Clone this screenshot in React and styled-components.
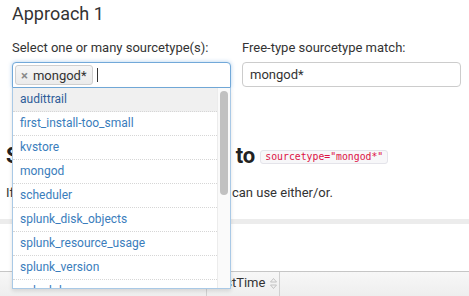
import React from 'react';
import styled, { createGlobalStyle } from 'styled-components';

const GlobalStyle = createGlobalStyle`
  body {
    margin: 0;
    background: #fff;
    color: #333;
    font-family: Roboto, "Liberation Sans", Arial, sans-serif;
    overflow: hidden;
  }
`;

const options = [
  'audittrail',
  'first_install-too_small',
  'kvstore',
  'mongod',
  'scheduler',
  'splunk_disk_objects',
  'splunk_resource_usage',
  'splunk_version',
  'splunkd_access'
];

const Page = styled.div`
  width: 469px;
  height: 296px;
  overflow: hidden;
`;

const TopPanel = styled.div`
  padding: 0 8px 0 12px;
`;

const Title = styled.h2`
  margin: 3px 0 0;
  font-size: 18px;
  line-height: 22px;
  font-weight: 400;
  color: #333;
`;

const Row = styled.div`
  display: grid;
  grid-template-columns: 219px 219px;
  column-gap: 11px;
  margin-top: 15px;
`;

const Field = styled.div`
  position: relative;
  display: flex;
  flex-direction: column;
`;

const Label = styled.label`
  font-size: 13px;
  line-height: 16px;
  margin-bottom: 6px;
  color: #333;
`;

const MultiBox = styled.div`
  box-sizing: border-box;
  height: 26px;
  display: flex;
  align-items: center;
  gap: 4px;
  padding: 0 2px;
  border: 1px solid #72a9d9;
  border-radius: 4px 4px 0 0;
  box-shadow: 0 0 4px rgba(82, 150, 215, 0.45);
  background: #fff;
`;

const Token = styled.span`
  box-sizing: border-box;
  height: 20px;
  display: inline-flex;
  align-items: center;
  gap: 5px;
  padding: 0 5px;
  border: 1px solid #cfcfcf;
  border-radius: 3px;
  background: linear-gradient(#f6f6f6, #ebebeb);
  font-size: 13px;
  color: #333;
`;

const Remove = styled.span`
  font-size: 13px;
  font-weight: 700;
  color: #8a8a8a;
`;

const Caret = styled.span`
  width: 1px;
  height: 14px;
  background: #333;
`;

const Dropdown = styled.div`
  position: absolute;
  top: 100%;
  left: 0;
  right: 0;
  height: 201px;
  box-sizing: border-box;
  display: flex;
  background: #fff;
  border: 1px solid #a9c9e6;
  border-top: none;
  box-shadow: 0 2px 4px rgba(0, 0, 0, 0.12);
  z-index: 10;
`;

const List = styled.ul`
  flex: 1;
  margin: 0;
  padding: 0;
  list-style: none;
  overflow: hidden;
`;

const Option = styled.li`
  box-sizing: border-box;
  height: 24px;
  line-height: 23px;
  padding-left: 7px;
  font-size: 12px;
  border-bottom: 1px dotted #d6d6d6;
  color: ${p => (p.$active ? '#2e5d99' : '#3a7dbc')};
  background: ${p => (p.$active ? '#f0f0f0' : '#fff')};
  white-space: nowrap;
`;

const ScrollTrack = styled.div`
  width: 13px;
  box-sizing: border-box;
  padding: 3px 2px 0 2px;
  border-left: 1px solid #ececec;
  background: #fafafa;
`;

const ScrollThumb = styled.div`
  width: 8px;
  height: 104px;
  border-radius: 4px;
  background: #c1c1c1;
`;

const TextInput = styled.div`
  box-sizing: border-box;
  height: 25px;
  display: flex;
  align-items: center;
  padding: 0 7px;
  border: 1px solid #cccccc;
  border-radius: 4px;
  font-size: 13px;
  color: #333;
`;

const Section = styled.div`
  padding: 0 0 0 6px;
`;

const Heading = styled.h3`
  margin: 55px 0 0;
  font-size: 22px;
  line-height: 26px;
  font-weight: 700;
  color: #222;
  white-space: nowrap;
  display: flex;
  align-items: center;
  gap: 5px;
`;

const Code = styled.code`
  font-family: "DejaVu Sans Mono", "Liberation Mono", monospace;
  font-size: 9.8px;
  line-height: 12px;
  font-weight: 400;
  color: #dd1144;
  background: #f7f7f9;
  border: 1px solid #e4e4ea;
  border-radius: 3px;
  padding: 0 4px;
  margin-top: 2px;
`;

const Paragraph = styled.p`
  margin: 15px 0 0;
  font-size: 13px;
  line-height: 18px;
  white-space: nowrap;
`;

const Divider = styled.div`
  height: 5px;
  margin-top: 17px;
  background: #ececec;
`;

const TableHead = styled.div`
  display: flex;
  height: 27px;
  margin-top: 47px;
  border-top: 1px solid #c6c6c6;
  background: linear-gradient(#f7f7f7, #ededed);
`;

const HeadCell = styled.div`
  box-sizing: border-box;
  width: ${p => p.$width || 'auto'};
  flex: ${p => (p.$width ? 'none' : 1)};
  display: flex;
  align-items: flex-start;
  gap: 5px;
  padding: 3px 0 0 8px;
  font-size: 13px;
  line-height: 16px;
  color: #333;
  border-right: ${p => (p.$width ? '1px solid #d0d0d0' : 'none')};
`;

const SortIcon = styled.svg`
  width: 7px;
  height: 11px;
  margin-top: 3px;
`;

export default function App() {
  return (
    <Page>
      <GlobalStyle />
      <TopPanel>
        <Title>Approach 1</Title>
        <Row>
          <Field>
            <Label>Select one or many sourcetype(s):</Label>
            <MultiBox>
              <Token><Remove>×</Remove>mongod*</Token>
              <Caret />
            </MultiBox>
            <Dropdown>
              <List>
                {options.map((o, i) => (
                  <Option key={o} $active={i === 0}>{o}</Option>
                ))}
              </List>
              <ScrollTrack><ScrollThumb /></ScrollTrack>
            </Dropdown>
          </Field>
          <Field>
            <Label>Free-type sourcetype match:</Label>
            <TextInput>mongod*</TextInput>
          </Field>
        </Row>
      </TopPanel>
      <Section>
        <Heading>Set your sourcetype(s) to<Code>sourcetype="mongod*"</Code></Heading>
        <Paragraph>If the sourcetype is already known, you can use either/or.</Paragraph>
      </Section>
      <Divider />
      <TableHead>
        <HeadCell $width="207px" />
        <HeadCell $width="73px">
          lastTime
          <SortIcon viewBox="0 0 7 11">
            <path d="M3.5 0.5 L6.5 4 H0.5 Z M3.5 10.5 L6.5 7 H0.5 Z" fill="none" stroke="#bdbdbd" strokeWidth="0.9" />
          </SortIcon>
        </HeadCell>
        <HeadCell />
      </TableHead>
    </Page>
  );
}
